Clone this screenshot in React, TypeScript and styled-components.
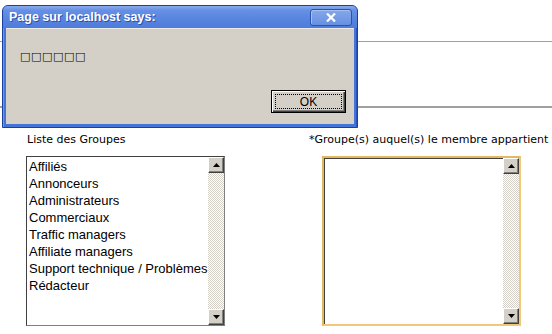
import styled, { createGlobalStyle } from "styled-components";

const GlobalStyle = createGlobalStyle`
  html, body {
    margin: 0;
    padding: 0;
    background: #ffffff;
    font-family: "Liberation Sans", Arial, sans-serif;
  }
`;

const groups = [
  "Affiliés",
  "Annonceurs",
  "Administrateurs",
  "Commerciaux",
  "Traffic managers",
  "Affiliate managers",
  "Support technique / Problèmes",
  "Rédacteur",
];

const App = () => {
  return (
    <Page>
      <GlobalStyle />
      <Rule $gap={41} $thick={1} />
      <Rule $gap={64} $thick={2} />
      <Columns>
        <Column>
          <Label>Liste des Groupes</Label>
          <ListBox $focused={false}>
            <Options>
              {groups.map((g) => (
                <Option key={g}>{g}</Option>
              ))}
            </Options>
            <ScrollBar />
          </ListBox>
        </Column>
        <Column $shift={14}>
          <Label $indent={-14}>*Groupe(s) auquel(s) le membre appartient</Label>
          <ListBox $focused>
            <Options />
            <ScrollBar />
          </ListBox>
        </Column>
      </Columns>

      <Dialog>
        <TitleBar>
          <Title>Page sur localhost says:</Title>
          <CloseButton>
            <svg width="10" height="9" viewBox="0 0 10 9">
              <path
                d="M1 0.5 L9 8.5 M9 0.5 L1 8.5"
                stroke="#ffffff"
                strokeWidth="2.2"
                fill="none"
              />
            </svg>
          </CloseButton>
        </TitleBar>
        <DialogBody>
          <Message>□□□□□□</Message>
          <ButtonRow>
            <OkButton>
              <FocusRing>OK</FocusRing>
            </OkButton>
          </ButtonRow>
        </DialogBody>
      </Dialog>
    </Page>
  );
};

const ScrollBar = () => (
  <Scroll>
    <Arrow>
      <svg width="7" height="4" viewBox="0 0 7 4">
        <path d="M3.5 0 L7 4 L0 4 Z" fill="#000" />
      </svg>
    </Arrow>
    <Track />
    <Arrow>
      <svg width="7" height="4" viewBox="0 0 7 4">
        <path d="M0 0 L7 0 L3.5 4 Z" fill="#000" />
      </svg>
    </Arrow>
  </Scroll>
);

export default App;

const Page = styled.div`
  position: relative;
  width: 552px;
  height: 334px;
  overflow: hidden;
  display: flex;
  flex-direction: column;
`;

const Rule = styled.div<{ $gap: number; $thick: number }>`
  margin-top: ${(p) => p.$gap}px;
  height: ${(p) => p.$thick}px;
  background: #a0a0a0;
  width: 100%;
  flex-shrink: 0;
`;

const Columns = styled.div`
  display: grid;
  grid-template-columns: 282px 1fr;
  padding: 24px 0 0 26px;
`;

const Column = styled.div<{ $shift?: number }>`
  display: flex;
  flex-direction: column;
  padding-left: ${(p) => p.$shift || 0}px;
`;

const Label = styled.div<{ $indent?: number }>`
  font-family: "DejaVu Sans", Tahoma, sans-serif;
  font-size: 11px;
  color: #000;
  height: 24px;
  line-height: 15px;
  margin-left: ${(p) => (p.$indent || 0) + 1}px;
  white-space: nowrap;
`;

const ListBox = styled.div<{ $focused: boolean }>`
  width: 199px;
  height: 170px;
  box-sizing: border-box;
  display: flex;
  background: #fff;
  border: ${(p) => (p.$focused ? "2px solid #f0c878" : "1px solid #7f7f7f")};
  border-top-color: ${(p) => (p.$focused ? "#e5b860" : "#404040")};
  border-left-color: ${(p) => (p.$focused ? "#e5b860" : "#404040")};
  box-shadow: ${(p) => (p.$focused ? "inset 1px 1px 0 #404040" : "none")};
`;

const Options = styled.div`
  flex: 1;
  padding: 1px 0 0 2px;
  overflow: hidden;
`;

const Option = styled.div`
  font-family: "Liberation Sans", Arial, sans-serif;
  font-size: 13px;
  line-height: 17px;
  color: #000;
  white-space: nowrap;
`;

const Scroll = styled.div`
  width: 16px;
  display: flex;
  flex-direction: column;
`;

const Arrow = styled.div`
  width: 16px;
  height: 16px;
  box-sizing: border-box;
  background: #d4d0c8;
  border: 1px solid;
  border-color: #ffffff #404040 #404040 #ffffff;
  box-shadow: inset -1px -1px 0 #808080;
  display: flex;
  align-items: center;
  justify-content: center;
`;

const Track = styled.div`
  flex: 1;
  background-color: #ffffff;
  background-image: repeating-conic-gradient(
    #d4d0c8 0 25%,
    #ffffff 0 50%
  );
  background-size: 2px 2px;
`;

const Dialog = styled.div`
  position: absolute;
  left: 2px;
  top: 5px;
  width: 356px;
  height: 123px;
  box-sizing: border-box;
  display: flex;
  flex-direction: column;
  background: #4574d8;
  border: 1px solid #1b3f9e;
  border-radius: 6px 6px 0 0;
  padding: 0 3px 3px;
  box-shadow: inset 1px 0 0 #6b96ea, inset -1px 0 0 #2c56be;
`;

const TitleBar = styled.div`
  height: 22px;
  margin: 0 -3px;
  padding: 0 5px 0 6px;
  display: flex;
  align-items: center;
  justify-content: space-between;
  border-radius: 5px 5px 0 0;
  background: linear-gradient(
    to bottom,
    #8aabee 0%,
    #6690e4 20%,
    #5884df 60%,
    #4f7cdb 100%
  );
`;

const Title = styled.div`
  font-family: "Liberation Sans", Arial, sans-serif;
  font-weight: bold;
  font-size: 12.5px;
  color: #ffffff;
  text-shadow: 1px 1px 0 #2a4fa8;
`;

const CloseButton = styled.div`
  width: 42px;
  height: 17px;
  box-sizing: border-box;
  border: 1px solid #2a50b0;
  border-radius: 3px;
  background: linear-gradient(to bottom, #86a8ea, #6690e2);
  box-shadow: inset 1px 1px 0 #a6c0f0;
  display: flex;
  align-items: center;
  justify-content: center;
  margin-top: 1px;
`;

const DialogBody = styled.div`
  flex: 1;
  background: #d4d0c8;
  display: flex;
  flex-direction: column;
  border-top: 1px solid #ecebe6;
`;

const Message = styled.div`
  font-family: "DejaVu Sans", sans-serif;
  font-size: 11px;
  letter-spacing: 0.6px;
  color: #000;
  padding: 21px 0 0 14px;
  height: 40px;
`;

const ButtonRow = styled.div`
  display: flex;
  justify-content: flex-end;
  padding-right: 8px;
`;

const OkButton = styled.div`
  width: 75px;
  height: 23px;
  box-sizing: border-box;
  border: 1px solid #000;
  background: #d4d0c8;
  box-shadow: inset 1px 1px 0 #ffffff, inset -1px -1px 0 #404040,
    inset -2px -2px 0 #808080;
  padding: 3px;
  display: flex;
`;

const FocusRing = styled.div`
  flex: 1;
  border: 1px dotted #000;
  display: flex;
  align-items: center;
  justify-content: center;
  font-family: "Liberation Sans", Arial, sans-serif;
  font-size: 12px;
  color: #000;
`;
